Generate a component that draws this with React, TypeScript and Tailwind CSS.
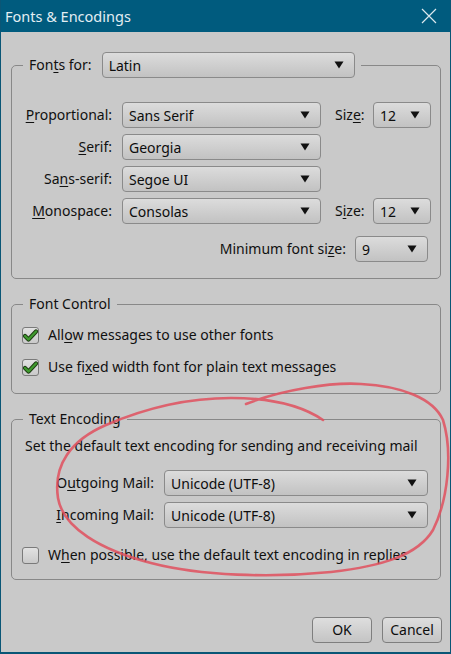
import React from "react";

const FONT = "font-['Noto_Sans','Open_Sans',sans-serif]";

function Key({ children }: { children: React.ReactNode }) {
  return <span className="underline underline-offset-2 decoration-1">{children}</span>;
}

function Dropdown({ value, className }: { value: string; className: string }) {
  return (
    <div
      className={`flex h-[26px] items-center justify-between rounded-[4px] border border-[#8a8a8a] bg-gradient-to-b from-[#dcdcdc] to-[#c2c2c2] pl-[6px] pr-[10px] text-[#0d0d0d] ${className}`}
    >
      <span className="pt-[2px]">{value}</span>
      <svg width="10" height="8" viewBox="0 0 10 8">
        <path d="M0.5 0.5 H9.5 L5 7.5 Z" fill="#111" />
      </svg>
    </div>
  );
}

function Checkbox({ checked }: { checked?: boolean }) {
  return (
    <div className="flex h-[17px] w-[17px] shrink-0 items-center justify-center rounded-[3px] border border-[#7a7a7a] bg-gradient-to-b from-[#e2e2e2] to-[#cacaca]">
      {checked && (
        <svg width="15" height="13" viewBox="0 0 15 13">
          <path
            d="M2 7 L5.5 10.5 L13 2.5"
            fill="none"
            stroke="#1d3a12"
            strokeWidth="4.2"
            strokeLinecap="round"
            strokeLinejoin="round"
          />
          <path
            d="M2 7 L5.5 10.5 L13 2.5"
            fill="none"
            stroke="#3f9a2e"
            strokeWidth="2.4"
            strokeLinecap="round"
            strokeLinejoin="round"
          />
        </svg>
      )}
    </div>
  );
}

function Button({ label }: { label: string }) {
  return (
    <button className="flex h-[26px] w-[60px] items-center justify-center rounded-[4px] border border-[#7e7e7e] bg-gradient-to-b from-[#dedede] to-[#c4c4c4] text-[#0d0d0d]">
      {label}
    </button>
  );
}

export default function App() {
  return (
    <div className={`relative flex h-[654px] w-[451px] flex-col border-x border-b-2 border-[#0a5676] bg-[#c9c9c9] text-[14px] leading-[20px] text-[#101010] ${FONT}`}>
      <div className="flex h-[32px] items-center justify-between bg-[#005b7e] pl-[4px] pr-[13px] text-[14.5px] text-[#e3eef3]">
        <span>Fonts &amp; Encodings</span>
        <svg width="16" height="16" viewBox="0 0 16 16">
          <path d="M1 1 L15 15 M15 1 L1 15" stroke="#dbe8ee" strokeWidth="1.2" />
        </svg>
      </div>

      <div className="flex flex-1 flex-col pl-[10px] pr-[9px] pt-[20px]">
        <fieldset className="h-[227px] rounded-[5px] border border-[#888]">
          <legend className="ml-[11px] px-[6px]">
            <div className="flex items-center">
              <span className="mr-[10px]">
                Fon<Key>t</Key>s for:
              </span>
              <Dropdown value="Latin" className="w-[253px]" />
            </div>
          </legend>
          <div className="mt-[24px] flex flex-col gap-[6px]">
            <div className="flex items-center">
              <span className="w-[100px] text-right">
                <Key>P</Key>roportional:
              </span>
              <Dropdown value="Sans Serif" className="ml-[10px] w-[199px]" />
              <span className="ml-[14px] w-[38px]">
                Siz<Key>e</Key>:
              </span>
              <Dropdown value="12" className="w-[58px]" />
            </div>
            <div className="flex items-center">
              <span className="w-[100px] text-right">
                <Key>S</Key>erif:
              </span>
              <Dropdown value="Georgia" className="ml-[10px] w-[199px]" />
            </div>
            <div className="flex items-center">
              <span className="w-[100px] text-right">
                Sa<Key>n</Key>s-serif:
              </span>
              <Dropdown value="Segoe UI" className="ml-[10px] w-[199px]" />
            </div>
            <div className="flex items-center">
              <span className="w-[100px] text-right">
                <Key>M</Key>onospace:
              </span>
              <Dropdown value="Consolas" className="ml-[10px] w-[199px]" />
              <span className="ml-[14px] w-[38px]">
                S<Key>i</Key>ze:
              </span>
              <Dropdown value="12" className="w-[58px]" />
            </div>
            <div className="mt-[6px] flex items-center justify-end pr-[12px]">
              <span className="mr-[9px]">
                Minimum font si<Key>z</Key>e:
              </span>
              <Dropdown value="9" className="w-[73px]" />
            </div>
          </div>
        </fieldset>

        <fieldset className="mt-[15px] h-[100px] rounded-[5px] border border-[#888]">
          <legend className="ml-[11px] px-[6px]">Font Control</legend>
          <div className="mt-[11px] flex flex-col gap-[12px] pl-[10px]">
            <div className="flex h-[20px] items-center gap-[9px]">
              <Checkbox checked />
              <span>
                All<Key>o</Key>w messages to use other fonts
              </span>
            </div>
            <div className="flex h-[20px] items-center gap-[9px]">
              <Checkbox checked />
              <span>
                Use fi<Key>x</Key>ed width font for plain text messages
              </span>
            </div>
          </div>
        </fieldset>

        <fieldset className="mt-[15px] h-[171px] rounded-[5px] border border-[#888]">
          <legend className="ml-[11px] px-[6px]">Text Encoding</legend>
          <div className="mt-[7px] pl-[13px]">Set the default text encoding for sending and receiving mail</div>
          <div className="mt-[14px] flex flex-col gap-[6px]">
            <div className="flex items-center">
              <span className="w-[142px] text-right">
                O<Key>u</Key>tgoing Mail:
              </span>
              <Dropdown value="Unicode (UTF-8)" className="ml-[10px] w-[264px]" />
            </div>
            <div className="flex items-center">
              <span className="w-[142px] text-right">
                <Key>I</Key>ncoming Mail:
              </span>
              <Dropdown value="Unicode (UTF-8)" className="ml-[10px] w-[264px]" />
            </div>
          </div>
          <div className="mt-[17px] flex h-[20px] items-center gap-[9px] pl-[10px]">
            <Checkbox />
            <span>
              W<Key>h</Key>en possible, use the default text encoding in replies
            </span>
          </div>
        </fieldset>

        <div className="-mr-[1px] mt-[37px] flex justify-end gap-[10px]">
          <Button label="OK" />
          <Button label="Cancel" />
        </div>
      </div>

      <svg className="pointer-events-none absolute left-0 top-0" width="451" height="654" viewBox="0 0 451 654">
        <path
          d="M245 404 C280 390 330 382 360 384 C400 386 432 398 442 420 C452 452 447 500 432 530 C417 555 382 566 330 572 C270 578 200 576 150 563 C100 550 62 528 57 498 C52 465 70 440 105 425 C140 410 180 398 230 398 C270 398 300 405 322 420"
          fill="none"
          stroke="#e0505e"
          strokeOpacity="0.85"
          strokeWidth="2.6"
          strokeLinecap="round"
        />
      </svg>
    </div>
  );
}
